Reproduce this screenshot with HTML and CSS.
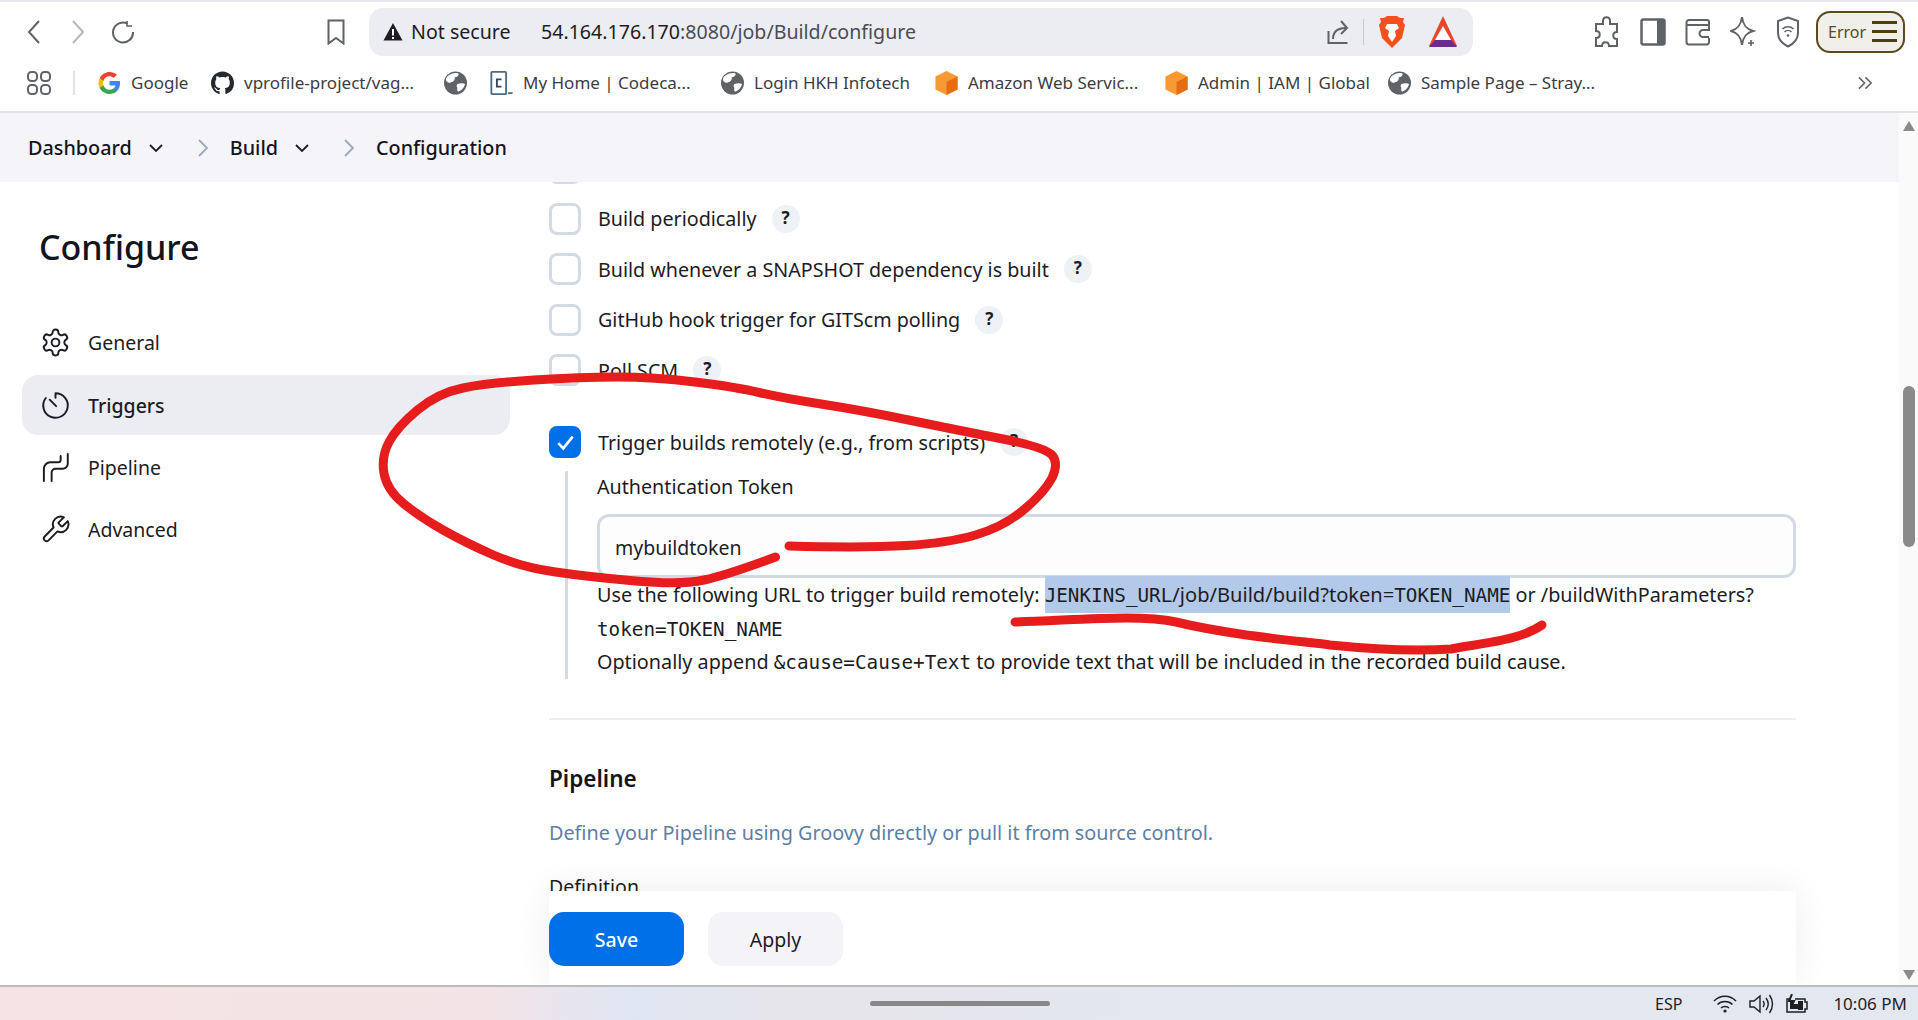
FILE: index.html
```html
<!DOCTYPE html>
<html lang="en">
<head>
<meta charset="utf-8">
<title>Build Config</title>
<link rel="stylesheet" href="styles.css">
</head>
<body>
<div class="app">
  <header class="chrome">
    <div class="toolbar">
      <svg class="ti nav-back" viewBox="0 0 13 24"><path d="M12 1 2 12l10 11"/></svg>
      <svg class="ti nav-fwd" viewBox="0 0 13 24"><path d="m1 1 10 11L1 23"/></svg>
      <svg class="ti nav-reload" viewBox="0 0 24 24"><path d="M16.500 3.600A10 10 0 1 0 22 12"/><path d="M16 1v5h5" class="thin"/></svg>
      <svg class="ti nav-mark" viewBox="0 0 20 26"><path d="M2.500 1.500h15v23L10 19l-7.500 5.500z"/></svg>
      <div class="omnibox">
        <svg class="warn" viewBox="0 0 20 20"><path d="M10 1 .5 18.500h19z"/><rect x="9" y="7" width="2" height="6.500" class="wh"/><rect x="9" y="15" width="2" height="2" class="wh"/></svg>
        <span class="notsec">Not secure</span>
        <span class="url"><b>54.164.176.170</b>:8080/job/Build/configure</span>
        <svg class="ti om-share" viewBox="0 0 24 26"><path d="M1.500 12v12h19"/><path d="M6 20c0-8 5-11 13-11"/><path d="m14 2 6 7-6 6"/></svg>
        <i class="om-div"></i>
        <svg class="brave" viewBox="0 0 26 32"><path d="M5 2 8 0h10l3 2 4 0-1 4 2 3-3 13-7 7-3 3-3-3-7-7L0 9l2-3-1-4z" class="or"/><path d="M8 8h10l2 4-4 3 1 5-4 6-4-6 1-5-4-3z" class="wh"/></svg>
        <svg class="bat" viewBox="0 0 28 32"><path d="M14 0 28 30H0z" class="bat-o"/><path d="M14 10 22 24H6z" class="wh"/><path d="M6 24h16l6 7H0z" class="bat-p"/></svg>
      </div>
      <svg class="ti ex-puzzle" viewBox="0 0 26 32"><path d="M9 5c0-5 7-5 7 0v3h7v8c-5 0-5 7 0 7v7h-8c0-5-7-5-7 0H2v-8c5 0 5-7 0-7V8h7z"/></svg>
      <svg class="side-ic" viewBox="0 0 26 28"><rect x="1.500" y="1.500" width="23" height="25" rx="2"/><path d="M17 1.500h7.500v25H17z" class="fill"/></svg>
      <svg class="ti ex-wallet" viewBox="0 0 26 28"><path d="M24 7V4a2 2 0 0 0-2-2H4a2.500 2.500 0 0 0-2.500 2.500V24A2.500 2.500 0 0 0 4 26.500h18a2.500 2.500 0 0 0 2-2.500v-4"/><path d="M2 7h22v5h-6a3 3 0 0 0 0 7h6"/></svg>
      <svg class="ti ex-star" viewBox="0 0 26 32"><path d="M12 1c1 8 4 12 11 14-7 2-10 6-11 14C11 21 8 17 1 15 8 13 11 9 12 1z"/><path d="M21 24v6M18 27h6" class="thin"/></svg>
      <svg class="ti ex-shield" viewBox="0 0 24 32"><path d="M12 1.500 2 5v12c0 7 5 11 10 13.500C17 28 22 24 22 17V5z"/><path d="M6.500 13c3-3 8-3 11 0M8.500 16c2-2 5-2 7 0" class="thin"/><circle cx="12" cy="19.500" r="1.300" class="dot"/></svg>
      <div class="errbtn"><span>Error</span><i class="burger"><i></i><i></i><i></i></i></div>
    </div>
    <div class="bookmarks">
      <svg class="ti apps" viewBox="0 0 24 24"><rect x="1" y="1" width="9" height="9" rx="3.500"/><rect x="14" y="1" width="9" height="9" rx="3.500"/><rect x="1" y="14" width="9" height="9" rx="3.500"/><rect x="14" y="14" width="9" height="9" rx="3.500"/></svg>
      <i class="bm-div"></i>
      <div class="bm bm-google"><svg class="bi" viewBox="0 0 24 24"><path fill="#4285F4" d="M23 12.300c0-.8-.1-1.600-.2-2.300H12v4.500h6.200c-.3 1.400-1.100 2.600-2.300 3.400v2.800h3.700c2.100-2 3.400-4.900 3.400-8.400z"/><path fill="#34A853" d="M12 23.500c3.100 0 5.700-1 7.600-2.800l-3.700-2.800c-1 .7-2.300 1.100-3.900 1.100-3 0-5.500-2-6.400-4.700H1.800v2.900C3.700 20.900 7.600 23.500 12 23.500z"/><path fill="#FBBC05" d="M5.600 14.300c-.5-1.400-.5-3 0-4.500V6.900H1.800a11.500 11.500 0 0 0 0 10.300z"/><path fill="#EA4335" d="M12 5c1.700 0 3.200.6 4.400 1.700l3.300-3.300C17.700 1.600 15.100.500 12 .500 7.600.500 3.700 3.100 1.800 6.900l3.800 2.900C6.500 7 9 5 12 5z"/></svg><span>Google</span></div>
      <div class="bm bm-git"><svg class="bi bi-git" viewBox="0 0 16 16"><path d="M8 0C3.580 0 0 3.580 0 8c0 3.540 2.290 6.530 5.470 7.590.4.070.55-.17.55-.38 0-.19-.01-.82-.01-1.490-2.010.37-2.530-.49-2.690-.94-.09-.23-.48-.94-.82-1.130-.28-.15-.68-.52-.01-.53.63-.01 1.080.58 1.230.82.72 1.210 1.870.87 2.330.66.070-.52.28-.87.51-1.070-1.780-.2-3.640-.89-3.640-3.950 0-.87.31-1.590.82-2.150-.08-.2-.36-1.020.08-2.120 0 0 .67-.21 2.200.82.64-.18 1.320-.27 2-.27.68 0 1.360.09 2 .27 1.530-1.040 2.200-.82 2.200-.82.44 1.100.16 1.920.08 2.120.51.56.82 1.270.82 2.150 0 3.070-1.870 3.750-3.650 3.950.29.25.54.73.54 1.480 0 1.070-.01 1.930-.01 2.200 0 .21.15.46.55.38A8.013 8.013 0 0 0 16 8c0-4.420-3.580-8-8-8z"/></svg><span>vprofile-project/vag...</span></div>
      <div class="bm bm-globe"><svg class="bi" viewBox="0 0 24 24"><circle cx="12" cy="12" r="12" class="gb"/><path d="M5 4c3-2 7-3 10-2 1 2-2 4-4 4 1 2-1 5-3 5-2 2-5 0-6-2 0-2 1-4 3-5zM14 13c3-1 6-1 8 0-1 4-4 7-7 8-2-1-1-3-1-4-1-1-1-3 0-4z" class="wh"/></svg></div>
      <div class="bm bm-code"><svg class="bi" viewBox="0 0 24 26"><rect x="1" y="1" width="16" height="24" rx="1" class="c-box"/><path d="M12 9H7v8h5" class="c-c"/><path d="M19 24h5" class="c-u"/></svg><span>My Home | Codeca...</span></div>
      <div class="bm bm-login"><svg class="bi" viewBox="0 0 24 24"><circle cx="12" cy="12" r="12" class="gb"/><path d="M5 4c3-2 7-3 10-2 1 2-2 4-4 4 1 2-1 5-3 5-2 2-5 0-6-2 0-2 1-4 3-5zM14 13c3-1 6-1 8 0-1 4-4 7-7 8-2-1-1-3-1-4-1-1-1-3 0-4z" class="wh"/></svg><span>Login HKH Infotech</span></div>
      <div class="bm bm-aws"><svg class="bi" viewBox="0 0 24 26"><path d="M12 0 24 6v14l-12 6L0 20V6z" fill="#f79a34"/><path d="M12 12 24 6v14l-12 6z" fill="#e66c12"/></svg><span>Amazon Web Servic...</span></div>
      <div class="bm bm-iam"><svg class="bi" viewBox="0 0 24 26"><path d="M12 0 24 6v14l-12 6L0 20V6z" fill="#f79a34"/><path d="M12 12 24 6v14l-12 6z" fill="#e66c12"/></svg><span>Admin | IAM | Global</span></div>
      <div class="bm bm-sample"><svg class="bi" viewBox="0 0 24 24"><circle cx="12" cy="12" r="12" class="gb"/><path d="M5 4c3-2 7-3 10-2 1 2-2 4-4 4 1 2-1 5-3 5-2 2-5 0-6-2 0-2 1-4 3-5zM14 13c3-1 6-1 8 0-1 4-4 7-7 8-2-1-1-3-1-4-1-1-1-3 0-4z" class="wh"/></svg><span>Sample Page – Stray...</span></div>
      <svg class="ti more" viewBox="0 0 16 14"><path d="m1 1 6 6-6 6M8 1l6 6-6 6" class="thin"/></svg>
    </div>
  </header>

  <nav class="crumbs">
    <a class="crumb">Dashboard</a>
    <svg class="cr-down" viewBox="0 0 14 8"><path d="m1 1 6 6 6-6"/></svg>
    <svg class="cr-sep" viewBox="0 0 11 18"><path d="m1 1 8 8-8 8"/></svg>
    <a class="crumb">Build</a>
    <svg class="cr-down" viewBox="0 0 14 8"><path d="m1 1 6 6 6-6"/></svg>
    <svg class="cr-sep" viewBox="0 0 11 18"><path d="m1 1 8 8-8 8"/></svg>
    <a class="crumb">Configuration</a>
  </nav>

  <main class="main">
    <aside class="sidebar">
      <h1 class="title">Configure</h1>
      <ul class="tasks">
        <li class="task"><svg class="tk" viewBox="0 0 24 24"><path d="M12.220 2h-.44a2 2 0 0 0-2 2v.18a2 2 0 0 1-1 1.730l-.43.25a2 2 0 0 1-2 0l-.15-.08a2 2 0 0 0-2.730.73l-.22.38a2 2 0 0 0 .73 2.730l.15.1a2 2 0 0 1 1 1.720v.51a2 2 0 0 1-1 1.740l-.15.09a2 2 0 0 0-.73 2.730l.22.38a2 2 0 0 0 2.730.73l.15-.08a2 2 0 0 1 2 0l.43.25a2 2 0 0 1 1 1.730V20a2 2 0 0 0 2 2h.44a2 2 0 0 0 2-2v-.18a2 2 0 0 1 1-1.730l.43-.25a2 2 0 0 1 2 0l.15.08a2 2 0 0 0 2.730-.73l.22-.39a2 2 0 0 0-.73-2.730l-.15-.08a2 2 0 0 1-1-1.740v-.5a2 2 0 0 1 1-1.740l.15-.09a2 2 0 0 0 .73-2.730l-.22-.38a2 2 0 0 0-2.730-.73l-.15.08a2 2 0 0 1-2 0l-.43-.25a2 2 0 0 1-1-1.730V4a2 2 0 0 0-2-2z"/><circle cx="12" cy="12" r="3"/></svg><span>General</span></li>
        <li class="task active"><svg class="tk" viewBox="0 0 24 24"><path d="M12 6V2.500a9.500 9.500 0 1 1-7.500 3.700"/><path d="m7.500 7.500 5 5"/></svg><span>Triggers</span></li>
        <li class="task"><svg class="tk" viewBox="0 0 24 24"><path d="M21.500 1.500V9a4 4 0 0 1-4 4H12a3 3 0 0 0-3 3v6.500"/><path d="M16 3v3a2 2 0 0 1-2 2H8a5 5 0 0 0-5 5v9.500"/></svg><span>Pipeline</span></li>
        <li class="task"><svg class="tk" viewBox="0 0 24 24"><path d="M14.700 6.300a1 1 0 0 0 0 1.400l1.600 1.600a1 1 0 0 0 1.400 0l3.770-3.770a6 6 0 0 1-7.940 7.940l-6.910 6.910a2.120 2.120 0 0 1-3-3l6.910-6.910a6 6 0 0 1 7.940-7.940l-3.760 3.760z"/></svg><span>Advanced</span></li>
      </ul>
    </aside>

    <section class="config">
      <div class="scroll">
        <div class="opt"><i class="cb"></i><span class="lbl">Build after other projects are built</span><i class="help">?</i></div>
        <div class="opt"><i class="cb"></i><span class="lbl">Build periodically</span><i class="help">?</i></div>
        <div class="opt"><i class="cb"></i><span class="lbl">Build whenever a SNAPSHOT dependency is built</span><i class="help">?</i></div>
        <div class="opt"><i class="cb"></i><span class="lbl">GitHub hook trigger for GITScm polling</span><i class="help">?</i></div>
        <div class="opt"><i class="cb"></i><span class="lbl">Poll SCM</span><i class="help">?</i></div>
        <div class="opt opt-on"><i class="cb on"><svg viewBox="0 0 16 16"><path d="m2.500 8.500 3.800 4L13.500 3.500"/></svg></i><span class="lbl">Trigger builds remotely (e.g., from scripts)</span><i class="help">?</i></div>
        <div class="nested">
          <label class="field-label">Authentication Token</label>
          <div class="token">mybuildtoken</div>
          <p class="hint">Use the following URL to trigger build remotely: <span class="sel"><code>JENKINS_URL</code>/job/Build/build?token=<code>TOKEN_NAME</code></span> or /buildWithParameters?<br><code>token=TOKEN_NAME</code><br>Optionally append <code>&amp;cause=Cause+Text</code> to provide text that will be included in the recorded build cause.</p>
        </div>
        <hr class="rule">
        <h2 class="sec">Pipeline</h2>
        <p class="desc">Define your Pipeline using Groovy directly or pull it from source control.</p>
        <div class="def">Definition</div>
      </div>
      <div class="actions">
        <button class="btn primary">Save</button>
        <button class="btn">Apply</button>
      </div>
    </section>
  </main>

  <footer class="taskbar">
    <i class="home"></i>
    <span class="esp">ESP</span>
    <svg class="tb-wifi" viewBox="0 0 24 18"><path d="M1 6c6-6.500 16-6.500 22 0M4.500 9.500c4-4 11-4 15 0M8 13c2-2 6-2 8 0"/><circle cx="12" cy="16" r="1.600" class="dot"/></svg>
    <svg class="tb-vol" viewBox="0 0 25 20"><path d="M1 7h4l6-5v16l-6-5H1z"/><path d="M14 7c1.500 2 1.500 4 0 6M17 4c3 4 3 8 0 12M20.500 1c4 6 4 12 0 18"/></svg>
    <svg class="tb-bat" viewBox="0 0 24 20"><path d="M6 5H2v13h18v-3h2V8h-2V5H10"/><path d="M5 15V8h4l-2 2h6v5z" class="dot"/><path d="M13 7h5v9h-5z" class="dot"/><path d="M7 0 4 7h5l-3 6" class="bolt"/></svg>
    <span class="clock">10:06 PM</span>
  </footer>

  <div class="scrollbar">
    <i class="arrow up"></i>
    <i class="thumb"></i>
    <i class="arrow down"></i>
  </div>

  <svg class="ink" viewBox="0 0 1918 1020">
    <path d="M775.500 557Q727 575 704 580Q681 585 635.500 581Q590 577 555.500 572Q521 567 493.500 555Q466 543 443 530Q420 517 403.500 503.500Q387 490 384 473.500Q381 457 389 442Q397 427 417.500 410Q438 393 463 388Q488 383 534 380Q580 377 617 377Q654 377 695 382Q736 387 759 392.500Q782 398 821 404Q860 410 908.500 420Q957 430 1000.500 438.500Q1044 447 1052 455Q1059 463 1052 478Q1044 493 1023.500 510Q1003 527 975.500 535Q948 543 906.500 545.500Q865 548 789 546"/>
    <path d="M1015 622C1080 620 1140 614 1176 622C1230 635 1290 640 1330 645C1380 650 1420 651 1451 649C1490 642 1520 640 1542 625"/>
  </svg>
</div>
</body>
</html>
```
FILE: styles.css
```css
* { box-sizing: border-box; }
html, body { margin: 0; height: 100%; overflow: hidden; background: #fff; }
body { font-family: "Noto Sans", "Liberation Sans", sans-serif; color: #1c1c24; }
i { font-style: normal; display: block; }
.app { position: relative; width: 1918px; height: 1020px; display: flex; flex-direction: column; }

/* browser chrome */
.chrome { height: 113px; flex: none; background: #fff; border-top: 2px solid #e4e4ea; border-bottom: 2px solid #e2e3e8; }
.ti { fill: none; stroke: #5f6368; stroke-width: 2; flex: none; }
.ti .thin { stroke-width: 1.6; }
.wh { fill: #fff; }
.toolbar { height: 54px; display: flex; align-items: center; padding: 5px 0 0 27px; }
.nav-back { width: 13px; height: 24px; }
.nav-fwd { width: 13px; height: 24px; margin-left: 32px; stroke: #b4b6ba; }
.nav-reload { width: 24px; height: 24px; margin-left: 26px; }
.nav-mark { width: 20px; height: 26px; margin-left: 191px; }
.omnibox { width: 1104px; height: 48px; margin-left: 23px; background: #ecedf2; border-radius: 14px; display: flex; align-items: center; padding-left: 14px; }
.warn { width: 20px; height: 20px; flex: none; fill: #1d1d22; }
.notsec { margin-left: 8px; font-size: 19.600px; color: #1d1d22; white-space: nowrap; width: 130px; }
.url { font-size: 19.600px; color: #4b4b52; white-space: nowrap; width: 786px; }
.url b { font-weight: 400; color: #1d1d22; }
.om-share { width: 24px; height: 26px; }
.om-div { width: 1px; height: 26px; background: #c9cad0; margin-left: 12px; }
.brave { width: 26px; height: 32px; margin-left: 15px; flex: none; }
.or { fill: #f4501e; }
.bat { width: 28px; height: 32px; margin-left: 24px; flex: none; }
.bat-o { fill: #e8452c; }
.bat-p { fill: #6a2c91; }
.ex-puzzle { width: 26px; height: 32px; margin-left: 121px; }
.side-ic { width: 26px; height: 28px; margin-left: 20px; flex: none; fill: none; stroke: #5f6368; stroke-width: 2.5; }
.side-ic .fill { fill: #5f6368; stroke: none; }
.ex-wallet { width: 26px; height: 28px; margin-left: 19px; }
.ex-star { width: 26px; height: 32px; margin-left: 19px; }
.ex-shield { width: 24px; height: 32px; margin-left: 20px; }
.dot { fill: #5f6368; stroke: none; }
.errbtn { width: 89px; height: 42px; margin-left: 16px; background: #f0efe9; border: 2px solid #5c4a1e; border-radius: 14px; display: flex; align-items: center; padding-left: 10px; font-size: 16px; color: #5a4a20; gap: 6px; }
.burger { width: 25px; display: flex; flex-direction: column; gap: 6px; }
.burger i { height: 3px; background: #4f3d12; }

.bookmarks { height: 55px; display: flex; align-items: center; padding: 0 0 2px 27px; font-size: 17px; color: #3c3c43; white-space: nowrap; }
.apps { width: 24px; height: 24px; }
.bm-div { width: 2px; height: 24px; background: #e3e3e6; margin-left: 22px; margin-right: 23px; }
.bm { display: flex; align-items: center; gap: 10px; flex: none; }
.bm-google { width: 113px; }
.bm-git { width: 233px; }
.bm-globe { width: 46px; }
.bm-code { width: 231px; }
.bm-login { width: 214px; }
.bm-aws { width: 230px; }
.bm-iam { width: 223px; }
.bm-sample { width: 220px; }
.bi { width: 23px; height: 24px; flex: none; }
.bi-git { fill: #24292f; }
.gb { fill: #5f6368; }
.c-box { fill: #fff; stroke: #4a6b85; stroke-width: 2; }
.c-c { fill: none; stroke: #33475b; stroke-width: 2; }
.c-u { stroke: #4a6b85; stroke-width: 2; }
.more { width: 15px; height: 14px; margin-left: auto; margin-right: 45px; }

/* breadcrumb */
.crumbs { height: 69px; flex: none; background: #f5f5f9; display: flex; align-items: center; padding-left: 28px; font-size: 19.800px; font-weight: 500; color: #14141f; }
.crumb { white-space: nowrap; }
.cr-down { width: 14px; height: 8px; margin-left: 17px; fill: none; stroke: #1c1c24; stroke-width: 1.800; }
.cr-sep { width: 11px; height: 18px; margin: 0 21px 0 35px; fill: none; stroke: #9aa8bd; stroke-width: 1.800; }

/* main */
.main { flex: 1; min-height: 0; display: flex; overflow: hidden; background: #fff; }
.sidebar { width: 549px; flex: none; padding: 40px 39px 0 22px; }
.title { margin: 0 0 0 17px; font-size: 34px; line-height: 50px; font-weight: 500; color: #14141f; }
.tasks { list-style: none; margin: 40px 0 0; padding: 0; display: flex; flex-direction: column; gap: 3px; }
.task { height: 60px; border-radius: 16px; display: flex; align-items: center; gap: 17px; padding-left: 18px; font-size: 19.500px; color: #1c1c24; }
.task.active { background: #ecedf2; font-weight: 500; }
.task:nth-child(3) { margin-top: -1px; }
.task:last-child { margin-top: -1px; }
.tk { width: 31px; height: 31px; flex: none; fill: none; stroke: #1c1c24; stroke-width: 1.500; stroke-linecap: round; stroke-linejoin: round; }

.config { width: 1247px; flex: none; display: flex; flex-direction: column; }
.scroll { flex: 1; min-height: 0; overflow: hidden; }
.opt { height: 32px; margin-top: 18.500px; display: flex; align-items: center; font-size: 19.700px; color: #1c1c24; white-space: nowrap; }
.opt:first-child { margin-top: -30px; }
.opt-on { margin-top: 40px; }
.cb { width: 32px; height: 32px; flex: none; border: 3px solid #d3dae6; border-radius: 8px; background: #fff; display: flex; align-items: center; justify-content: center; }
.cb.on { background: #0070e8; border-color: #0070e8; }
.cb svg { width: 21px; height: 21px; fill: none; stroke: #fff; stroke-width: 2; }
.lbl { margin-left: 17px; }
.help { width: 28px; height: 28px; margin-left: 15px; border-radius: 50%; background: #eef1f5; color: #1c1c24; font-size: 17px; font-weight: 700; text-align: center; line-height: 26px; }
.nested { margin: 13px 0 0 16px; border-left: 3px solid #d3dae6; padding-left: 29px; }
.field-label { display: block; font-size: 19.700px; line-height: 32px; }
.token { margin-top: 11px; height: 64px; border: 3px solid #d3dae6; border-radius: 12px; background: #fdfdfe; display: flex; align-items: center; padding: 2px 0 0 15px; font-size: 19.500px; }
.hint { margin: 0; font-size: 19.800px; line-height: 33.500px; white-space: nowrap; }
.sel { background: #b3c9e9; padding: 5px 0; font-size: 20.100px; }
code { font-family: "DejaVu Sans Mono", "Liberation Mono", monospace; font-size: 19.300px; line-height: 1; }
.rule { margin: 39px 0 0; border: 0; height: 2px; background: #eceef2; }
.sec { margin: 44px 0 0; font-size: 22.500px; line-height: 30px; font-weight: 600; color: #14141f; }
.desc { margin: 24px 0 0; font-size: 19.800px; line-height: 30px; color: #5b7fa6; }
.def { margin-top: 24px; font-size: 19.500px; line-height: 30px; }
.actions { height: 94px; flex: none; display: flex; align-items: flex-start; gap: 24px; padding-top: 21px; background: #fff; box-shadow: 0 -2px 36px rgba(0, 0, 0, .07); position: relative; }
.btn { width: 135px; height: 54px; border: 0; border-radius: 15px; background: #f4f4f8; font: inherit; font-size: 19.500px; color: #1c1c24; }
.btn.primary { background: #0070e8; color: #fff; font-weight: 500; }

/* taskbar */
.taskbar { height: 35px; flex: none; border-top: 2px solid #bcbcbc; background: linear-gradient(90deg, #f6e4e4 0, #f3e3e6 25%, #dfe6f3 33%, #e6e5ea 41%, #e4e7ef 60%, #e3e7f0 100%); display: flex; align-items: center; font-size: 16px; color: #1f1f24; position: relative; padding-left: 870px; }
.home { width: 180px; height: 5px; border-radius: 3px; background: #888; }
.esp { margin-left: 605px; }
.tb-wifi { width: 24px; height: 18px; margin-left: 31px; fill: none; stroke: #1f1f24; stroke-width: 1.500; }
.tb-wifi .dot, .tb-bat .dot { fill: #1f1f24; }
.tb-vol { width: 25px; height: 20px; margin-left: 12px; fill: none; stroke: #1f1f24; stroke-width: 1.400; }
.tb-bat { width: 24px; height: 20px; margin-left: 11px; fill: none; stroke: #1f1f24; stroke-width: 1.500; }
.tb-bat .bolt { stroke-width: 2; }
.clock { margin-left: 24px; font-size: 17px; white-space: nowrap; }

/* overlays */
.scrollbar { position: absolute; top: 113px; right: 0; width: 19px; height: 872px; background: #fafafa; display: flex; flex-direction: column; align-items: center; }
.arrow { width: 0; height: 0; border-left: 6px solid transparent; border-right: 6px solid transparent; }
.arrow.up { margin-top: 8px; border-bottom: 10px solid #8a8a8a; }
.arrow.down { margin-top: auto; margin-bottom: 5px; border-top: 10px solid #8a8a8a; }
.thumb { width: 12px; height: 161px; margin-top: 255px; border-radius: 6px; background: #8a8a8a; }
.ink { position: absolute; left: 0; top: 0; width: 1918px; height: 1020px; fill: none; stroke: #e71d1d; stroke-width: 9; stroke-linecap: round; stroke-linejoin: round; pointer-events: none; }
```
